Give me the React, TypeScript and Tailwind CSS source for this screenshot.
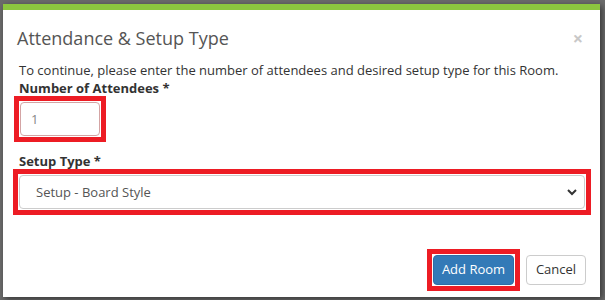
import React from "react";

export default function App() {
  return (
    <div
      className="w-[605px] h-[300px] bg-[#6b6b6b] pt-[4px] pl-[3px] pr-[5px] pb-[3px] overflow-hidden"
      style={{ fontFamily: '"Open Sans", "Liberation Sans", sans-serif' }}
    >
      <div className="h-full bg-white border-t-[6px] border-[#8cc63f] flex flex-col shadow-[2px_2px_6px_rgba(0,0,0,0.5)]">
        <div className="flex items-start justify-between pl-[14px] pr-[17px] pt-[17px]">
          <h4 className="text-[18px] leading-[22px] font-normal text-[#555]">Attendance &amp; Setup Type</h4>
          <span className="text-[#c8c8c8] text-[18px] leading-[18px] mt-[2px] font-bold">×</span>
        </div>
        <div className="pl-[16px] pr-[12px] pt-[12px] text-[13px] leading-[18px] text-[#333]">
          <p>To continue, please enter the number of attendees and desired setup type for this Room.</p>
          <label className="block font-bold">Number of Attendees *</label>
          <div className="ml-[-5px] mt-[-1px] w-[92px] border-[5px] border-[#ed1c24] p-[1px]">
            <input
              readOnly
              value="1"
              className="w-full h-[34px] rounded-[4px] border border-[#d4a4a4] px-[10px] text-[13px] text-[#888] outline-none"
            />
          </div>
          <label className="block font-bold mt-[10px]">Setup Type *</label>
          <div className="ml-[-6px] mr-[-3px] mt-[-1px] border-[5px] border-[#ed1c24] p-[1px]">
            <div className="h-[34px] rounded-[4px] border border-[#ccc] flex items-center justify-between pl-[16px] pr-[6px] text-[#555]">
              <span>Setup - Board Style</span>
              <svg width="12" height="12" viewBox="0 0 12 12">
                <path d="M2 4 L6 8 L10 4" fill="none" stroke="#333" strokeWidth="2" />
              </svg>
            </div>
          </div>
        </div>
        <div className="flex justify-end items-center pr-[14px] mt-[34px] gap-[6px]">
          <div className="border-[5px] border-[#ed1c24] p-[1px]">
            <button className="h-[30px] w-[81px] rounded-[4px] bg-[#337ab7] border border-[#2e6da4] text-white text-[13px]">
              Add Room
            </button>
          </div>
          <button className="h-[30px] w-[60px] rounded-[4px] bg-white border border-[#ccc] text-[#333] text-[13px]">
            Cancel
          </button>
        </div>
      </div>
    </div>
  );
}
